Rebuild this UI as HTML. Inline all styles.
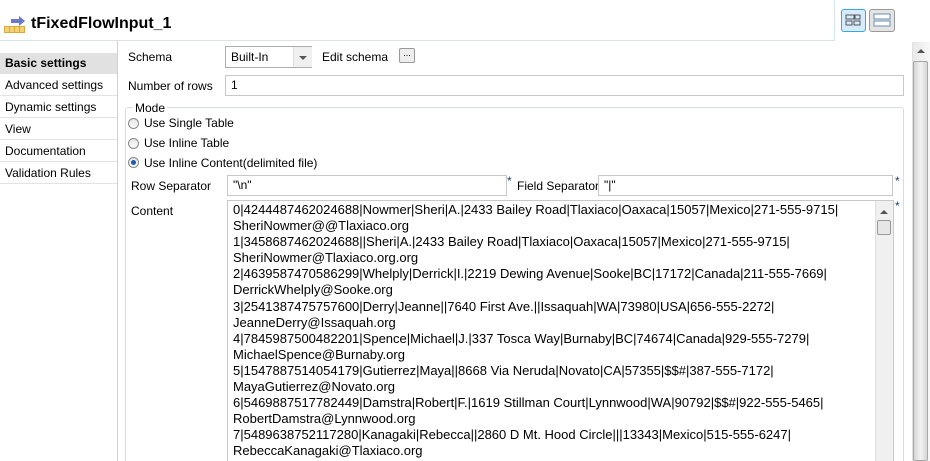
<!DOCTYPE html>
<html><head><style>
html,body{margin:0;width:930px;height:461px;overflow:hidden}
body{background:#fff;font-family:"Liberation Sans",sans-serif;font-size:12px;color:#000;position:relative}
.a{position:absolute}
.side div{position:absolute;left:0;width:117px;height:21px;border-bottom:1px solid #e3e3e3;padding-left:5px;line-height:21px;box-sizing:border-box}
.box{position:absolute;border:1px solid #c8c8c8;background:#fff;box-sizing:border-box;padding-left:5px}
.radio{position:absolute;width:11px;height:11px;border-radius:50%;border:1px solid #8a8a8a;background:linear-gradient(#e8e8e8,#fafafa);box-sizing:border-box}
.content{position:absolute;left:233px;top:202px;font-size:13px;line-height:16.1px;white-space:pre}
</style></head><body>
<div class="a" style="left:0;top:40px;width:835px;border-top:1px solid #d6e3ee"></div>
<div class="a" style="left:834px;top:0;height:40px;border-left:1px solid #d6e3ee"></div>
<svg class="a" style="left:4px;top:15px" width="22" height="20"><rect x="0" y="11" width="21" height="7" fill="#d9a93a"/><rect x="1" y="12" width="4" height="5" fill="#f3d277"/><rect x="6" y="12" width="4" height="5" fill="#f3d277"/><rect x="11" y="12" width="4" height="5" fill="#f3d277"/><rect x="16" y="12" width="4" height="5" fill="#f3d277"/><path d="M7 4h8V1l6 5-6 5V8H7z" fill="#6b79c8"/></svg>
<div class="a" style="left:31px;top:15px;font-size:16px;font-weight:bold">tFixedFlowInput_1</div>
<div class="a" style="left:841px;top:9px;width:25px;height:23px;border:1px solid #3aa4e8;border-radius:3px;background:#d6ecfa;box-sizing:border-box"><svg width="23" height="21"><rect x="4" y="5" width="8" height="4" fill="none" stroke="#555"/><rect x="13" y="5" width="5" height="4" fill="none" stroke="#555"/><rect x="4" y="11" width="6" height="4" fill="none" stroke="#555"/><rect x="12" y="11" width="6" height="4" fill="none" stroke="#555"/></svg></div>
<div class="a" style="left:869px;top:9px;width:26px;height:23px;border:1px solid #999;border-radius:3px;background:#e4e4e4;box-sizing:border-box"><svg width="24" height="21"><rect x="4" y="4" width="16" height="5" fill="#fff" stroke="#6a8fb0"/><rect x="4" y="11" width="16" height="5" fill="#fff" stroke="#6a8fb0"/></svg></div>
<div class="side">
<div style="top:53px;background:#e1e1e1;font-weight:bold">Basic settings</div>
<div style="top:75px">Advanced settings</div>
<div style="top:97px">Dynamic settings</div>
<div style="top:119px">View</div>
<div style="top:141px">Documentation</div>
<div style="top:163px">Validation Rules</div>
</div>
<div class="a" style="left:117px;top:41px;height:420px;border-left:1px solid #d0d0d0"></div>
<div class="a" style="left:128px;top:50px">Schema</div>
<div class="box" style="left:225px;top:46px;width:87px;height:22px;border-color:#adadad;line-height:20px">Built-In<div class="a" style="left:67px;top:0;width:18px;height:20px;background:#f0f0f0;border-left:1px solid #ddd"><div class="a" style="left:5px;top:9px;border:4px solid transparent;border-top:4px solid #555"></div></div></div>
<div class="a" style="left:322px;top:50px">Edit schema</div>
<div class="a" style="left:399px;top:48px;width:16px;height:15px;border:1px solid #999;border-radius:2px;background:#eee;box-sizing:border-box;font-size:9px;line-height:9px;text-align:center">...</div>
<div class="a" style="left:128px;top:79px">Number of rows</div>
<div class="box" style="left:225px;top:75px;width:679px;height:21px;line-height:19px">1</div>
<div class="a" style="left:125px;top:107px;width:779px;height:354px;border:1px solid #d8dde5;border-bottom:0;border-radius:3px 3px 0 0;box-sizing:border-box"></div>
<div class="a" style="left:133px;top:101px;background:#fff;padding:0 2px">Mode</div>
<div class="radio" style="left:128px;top:118px"></div><div class="a" style="left:144px;top:116px">Use Single Table</div>
<div class="radio" style="left:128px;top:138px"></div><div class="a" style="left:144px;top:136px">Use Inline Table</div>
<div class="radio" style="left:128px;top:157px"><div class="a" style="left:2px;top:2px;width:5px;height:5px;border-radius:50%;background:#1e5da8"></div></div><div class="a" style="left:144px;top:156px">Use Inline Content(delimited file)</div>
<div class="a" style="left:131px;top:179px">Row Separator</div>
<div class="box" style="left:227px;top:175px;width:280px;height:21px;line-height:19px">"\n"</div>
<div class="a" style="left:507px;top:174px;color:#1a3e78">*</div>
<div class="a" style="left:517px;top:179px">Field Separator</div>
<div class="box" style="left:598px;top:175px;width:295px;height:21px;line-height:19px">"|"</div>
<div class="a" style="left:895px;top:174px;color:#1a3e78">*</div>
<div class="box" style="left:227px;top:200px;width:667px;height:261px;border-bottom:0"></div>
<div class="a" style="left:131px;top:204px">Content</div>
<div class="a" style="left:895px;top:199px;color:#1a3e78">*</div>
<div class="content">0|4244487462024688|Nowmer|Sheri|A.|2433 Bailey Road|Tlaxiaco|Oaxaca|15057|Mexico|271-555-9715|
SheriNowmer@@Tlaxiaco.org
1|3458687462024688||Sheri|A.|2433 Bailey Road|Tlaxiaco|Oaxaca|15057|Mexico|271-555-9715|
SheriNowmer@Tlaxiaco.org.org
2|4639587470586299|Whelply|Derrick|I.|2219 Dewing Avenue|Sooke|BC|17172|Canada|211-555-7669|
DerrickWhelply@Sooke.org
3|2541387475757600|Derry|Jeanne||7640 First Ave.||Issaquah|WA|73980|USA|656-555-2272|
JeanneDerry@Issaquah.org
4|7845987500482201|Spence|Michael|J.|337 Tosca Way|Burnaby|BC|74674|Canada|929-555-7279|
MichaelSpence@Burnaby.org
5|1547887514054179|Gutierrez|Maya||8668 Via Neruda|Novato|CA|57355|$$#|387-555-7172|
MayaGutierrez@Novato.org
6|5469887517782449|Damstra|Robert|F.|1619 Stillman Court|Lynnwood|WA|90792|$$#|922-555-5465|
RobertDamstra@Lynnwood.org
7|5489638752117280|Kanagaki|Rebecca||2860 D Mt. Hood Circle|||13343|Mexico|515-555-6247|
RebeccaKanagaki@Tlaxiaco.org</div>
<div class="a" style="left:875px;top:201px;width:17px;height:260px;background:#f0f0f0;border-left:1px solid #e0e0e0"><div class="a" style="left:4px;top:9px;border:4px solid transparent;border-bottom:4px solid #555;border-top:0"></div><div class="a" style="left:1px;top:19px;width:14px;height:15px;border:1px solid #999;border-radius:2px;background:#e6e6e6;box-sizing:border-box"></div></div>
<div class="a" style="left:912px;top:42px;width:17px;height:419px;background:linear-gradient(90deg,#e8e8e8,#f8f8f8);border-left:1px solid #e0e0e0"><div class="a" style="left:4px;top:7px;border:4px solid transparent;border-bottom:4px solid #555;border-top:0"></div><div class="a" style="left:0;top:19px;width:15px;height:400px;border:1px solid #a8a8a8;border-radius:2px;background:linear-gradient(90deg,#d6d6d6,#f2f2f2,#d6d6d6);box-sizing:border-box"></div></div>
</body></html>
